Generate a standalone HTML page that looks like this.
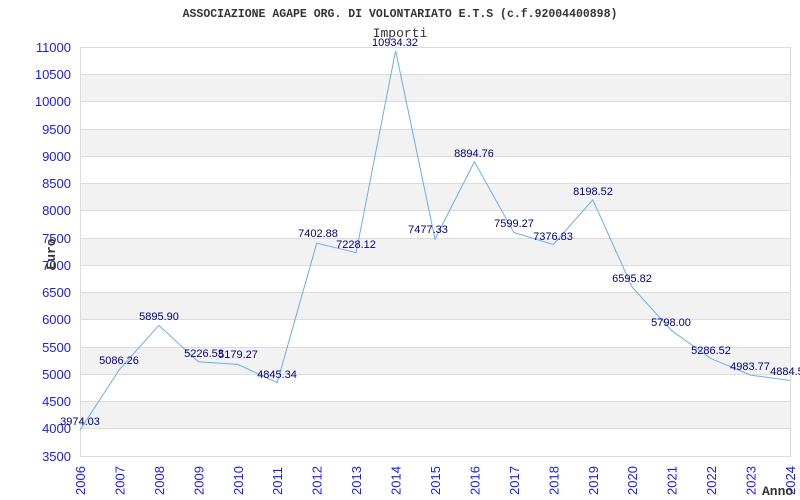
<!DOCTYPE html>
<html><head><meta charset="utf-8"><style>html,body{margin:0;padding:0;background:#fff}svg{display:block}</style></head><body>
<svg width="800" height="500" xmlns="http://www.w3.org/2000/svg">
<rect width="800" height="500" fill="#fff"/>
<g fill="#f2f2f2">
<rect x="80" y="74.3" width="710" height="27.3"/>
<rect x="80" y="128.8" width="710" height="27.3"/>
<rect x="80" y="183.3" width="710" height="27.3"/>
<rect x="80" y="237.9" width="710" height="27.3"/>
<rect x="80" y="292.4" width="710" height="27.3"/>
<rect x="80" y="347" width="710" height="27.3"/>
<rect x="80" y="401.5" width="710" height="27.3"/>
</g>
<g stroke="#dcdcdc" stroke-width="1">
<line x1="80" y1="47.5" x2="790" y2="47.5"/>
<line x1="80" y1="74.5" x2="790" y2="74.5"/>
<line x1="80" y1="101.5" x2="790" y2="101.5"/>
<line x1="80" y1="129.5" x2="790" y2="129.5"/>
<line x1="80" y1="156.5" x2="790" y2="156.5"/>
<line x1="80" y1="183.5" x2="790" y2="183.5"/>
<line x1="80" y1="210.5" x2="790" y2="210.5"/>
<line x1="80" y1="238.5" x2="790" y2="238.5"/>
<line x1="80" y1="265.5" x2="790" y2="265.5"/>
<line x1="80" y1="292.5" x2="790" y2="292.5"/>
<line x1="80" y1="319.5" x2="790" y2="319.5"/>
<line x1="80" y1="347.5" x2="790" y2="347.5"/>
<line x1="80" y1="374.5" x2="790" y2="374.5"/>
<line x1="80" y1="401.5" x2="790" y2="401.5"/>
<line x1="80" y1="428.5" x2="790" y2="428.5"/>
<line x1="80" y1="456.5" x2="790" y2="456.5"/>
<line x1="80.5" y1="47" x2="80.5" y2="457"/>
<line x1="790.5" y1="47" x2="790.5" y2="457"/>
</g>
<polyline fill="none" stroke="#6aaef0" stroke-width="1" points="80,430.1 119.4,369.5 158.9,325.3 198.3,361.8 237.8,364.4 277.2,382.6 316.7,243.2 356.1,252.7 395.6,50.6 435,239.1 474.4,161.8 513.9,232.5 553.3,244.6 592.8,199.8 632.2,287.2 671.7,330.7 711.1,358.6 750.6,375.1 790,380.5"/>
<text x="400" y="17" text-anchor="middle" font-family="Liberation Mono, monospace" font-size="11.5" font-weight="bold" fill="#333">ASSOCIAZIONE AGAPE ORG. DI VOLONTARIATO E.T.S (c.f.92004400898)</text>
<text x="400" y="37" text-anchor="middle" font-family="Liberation Mono, monospace" font-size="13" fill="#333">Importi</text>
<g font-family="Liberation Sans, sans-serif" font-size="13" fill="#1a1aff" text-anchor="end">
<text x="71" y="52">11000</text><text x="71" y="79">10500</text><text x="71" y="106">10000</text>
<text x="71" y="134">9500</text><text x="71" y="161">9000</text><text x="71" y="188">8500</text>
<text x="71" y="215">8000</text><text x="71" y="243">7500</text><text x="71" y="270">7000</text>
<text x="71" y="297">6500</text><text x="71" y="324">6000</text><text x="71" y="352">5500</text>
<text x="71" y="379">5000</text><text x="71" y="406">4500</text><text x="71" y="433">4000</text>
<text x="71" y="461">3500</text>
</g>
<g font-family="Liberation Sans, sans-serif" font-size="13" fill="#1a1aff">
<text transform="translate(85,495) rotate(-90)">2006</text>
<text transform="translate(124.4,495) rotate(-90)">2007</text>
<text transform="translate(163.9,495) rotate(-90)">2008</text>
<text transform="translate(203.3,495) rotate(-90)">2009</text>
<text transform="translate(242.8,495) rotate(-90)">2010</text>
<text transform="translate(282.2,495) rotate(-90)">2011</text>
<text transform="translate(321.7,495) rotate(-90)">2012</text>
<text transform="translate(361.1,495) rotate(-90)">2013</text>
<text transform="translate(400.6,495) rotate(-90)">2014</text>
<text transform="translate(440,495) rotate(-90)">2015</text>
<text transform="translate(479.4,495) rotate(-90)">2016</text>
<text transform="translate(518.9,495) rotate(-90)">2017</text>
<text transform="translate(558.3,495) rotate(-90)">2018</text>
<text transform="translate(597.8,495) rotate(-90)">2019</text>
<text transform="translate(637.2,495) rotate(-90)">2020</text>
<text transform="translate(676.7,495) rotate(-90)">2021</text>
<text transform="translate(716.1,495) rotate(-90)">2022</text>
<text transform="translate(755.6,495) rotate(-90)">2023</text>
<text transform="translate(795,495) rotate(-90)">2024</text>
</g>
<text x="762" y="495" font-family="Liberation Mono, monospace" font-size="13" font-weight="bold" fill="#333">Anno</text>
<text transform="translate(55,254) rotate(-90)" text-anchor="middle" font-family="Liberation Mono, monospace" font-size="13" font-weight="bold" fill="#333">Euro</text>
<g font-family="Liberation Sans, sans-serif" font-size="11" fill="#000080" text-anchor="middle">
<text x="80" y="425">3974.03</text>
<text x="119" y="364">5086.26</text>
<text x="159" y="320">5895.90</text>
<text x="204" y="357">5226.53</text>
<text x="238" y="358">5179.27</text>
<text x="277" y="378">4845.34</text>
<text x="318" y="237">7402.88</text>
<text x="356" y="248">7228.12</text>
<text x="395" y="46">10934.32</text>
<text x="428" y="233">7477.33</text>
<text x="474" y="157">8894.76</text>
<text x="514" y="227">7599.27</text>
<text x="553" y="240">7376.83</text>
<text x="593" y="195">8198.52</text>
<text x="632" y="282">6595.82</text>
<text x="671" y="326">5798.00</text>
<text x="711" y="354">5286.52</text>
<text x="750" y="370">4983.77</text>
<text x="790" y="375">4884.50</text>
</g>
</svg>
</body></html>
